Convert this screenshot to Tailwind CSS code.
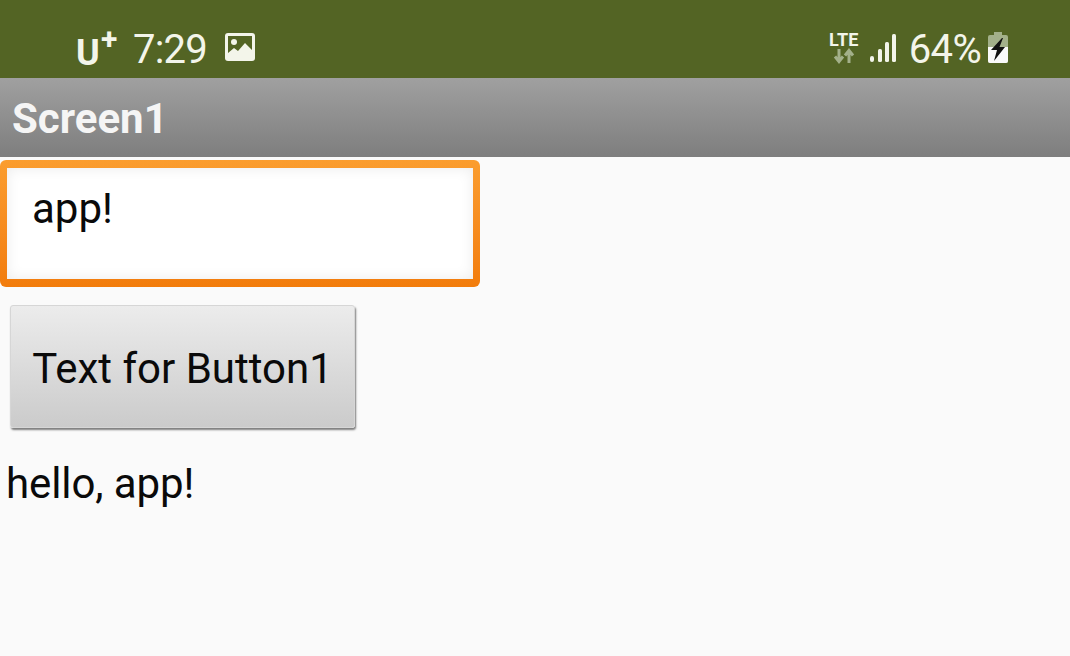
<!DOCTYPE html>
<html>
<head>
<meta charset="utf-8">
<script src="https://cdn.jsdelivr.net/npm/@tailwindcss/browser@4"></script>
</head>
<body class="m-0 w-[1070px] h-[656px] overflow-hidden bg-[#fafafa] font-['Roboto',sans-serif] text-black">
  <div class="h-[78px] bg-[#536424] flex items-center justify-between pl-[76px] pr-[61px] text-[#f3f5ea]">
    <div class="flex items-center h-full pt-[19px]">
      <span class="relative font-bold text-[36px] leading-none w-[45px] h-[36px] block pt-[4px]">U<span class="absolute left-[25px] top-[-7px] text-[30px] leading-none">+</span></span>
      <span class="ml-[12px] mt-[2px] text-[40px] leading-none font-normal tracking-[-0.8px]">7:29</span>
      <svg class="ml-[17px] mt-[-3px]" width="32" height="30" viewBox="0 0 32 30"><rect x="1" y="1" width="30" height="28" rx="3" fill="#f3f5ea"/><rect x="4" y="4" width="24" height="22" fill="#536424"/><circle cx="10" cy="10" r="3" fill="#f3f5ea"/><path d="M4 26 L4 21 L10 16 L14 19 L21 11 L28 18 L28 26 Z" fill="#f3f5ea"/></svg>
    </div>
    <div class="flex items-center h-full pt-[19px]">
      <div class="flex flex-col items-center w-[30px] mt-[-3px]">
        <span class="font-bold text-[18px] leading-[17px] tracking-[0.2px]">LTE</span>
        <svg width="24" height="16" viewBox="0 0 24 16"><path d="M7 1v12M3 8.5l4 5 4-5M17 15V3M13 7.5l4-5 4 5" fill="none" stroke="#a3b08a" stroke-width="3"/></svg>
      </div>
      <svg class="ml-[10px] mt-[-1px]" width="28" height="30" viewBox="0 0 28 30"><rect x="1" y="23" width="4" height="6" rx="2" fill="#f3f5ea"/><rect x="9" y="16" width="4" height="13" rx="1.5" fill="#f3f5ea"/><rect x="16" y="9" width="4" height="20" rx="1.5" fill="#f3f5ea"/><rect x="23" y="1" width="4" height="28" rx="1.5" fill="#f3f5ea"/></svg>
      <span class="ml-[12px] mt-[2px] text-[40px] leading-none font-normal tracking-[-0.7px]">64%</span>
      <svg class="ml-[6px] mt-[-1px]" width="22" height="32" viewBox="0 0 22 32"><rect x="7" y="0" width="8" height="4" fill="#a3b08a"/><rect x="1" y="3" width="20" height="28" rx="2" fill="#a3b08a"/><path d="M1 15h20v14a2 2 0 0 1-2 2H3a2 2 0 0 1-2-2z" fill="#fafafa"/><path d="M15 6 L4 18 L10 18 L7 29 L18 15 L12.5 15 L16 6 Z" fill="#111"/></svg>
    </div>
  </div>
  <div class="h-[79px] bg-gradient-to-b from-[#a0a0a0] to-[#7e7e7e] flex items-center pl-[12px]">
    <span class="text-[42px] font-bold text-[#f5f5f5] leading-none mt-[3px]">Screen1</span>
  </div>
  <div class="mt-[3px] w-[480px] h-[127px] rounded-[6px] bg-gradient-to-b from-[#fb9d2e] to-[#f27c0b] px-[7px] py-[8px]">
    <div class="h-full bg-white shadow-[inset_0_0_14px_rgba(0,0,0,0.08)] pl-[25px] pt-[20px] text-[42px] leading-none text-[#0a0a0a]">app!</div>
  </div>
  <div class="mt-[18px] ml-[10px] w-[345px] h-[123px] rounded-[3px] bg-gradient-to-b from-[#ececec] to-[#cbcbcb] border border-[#d6d6d6] shadow-[1px_2px_2px_rgba(0,0,0,0.5)] flex items-center justify-center pt-[4px] text-[42px] leading-none text-[#0a0a0a]">Text for Button1</div>
  <div class="mt-[35px] ml-[6px] text-[42px] leading-none tracking-[-0.1px] text-[#0a0a0a]">hello, app!</div>
</body>
</html>
